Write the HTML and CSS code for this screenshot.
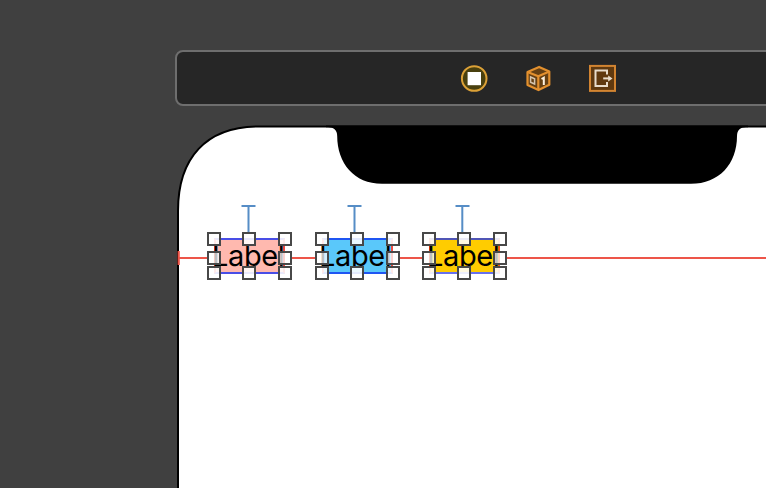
FILE: index.html
```html
<!DOCTYPE html>
<html lang="en">
<head>
<meta charset="utf-8">
<title>Storyboard</title>
<link rel="stylesheet" href="styles.css">
</head>
<body>
<header class="scene-bar">
  <svg class="icon" viewBox="0 0 28 28"><circle cx="14.2" cy="14.5" r="12.3" fill="#49400f" stroke="#dca137" stroke-width="2"/><rect x="7.6" y="8" width="13.4" height="13.2" fill="#fff"/></svg>
  <svg class="icon" viewBox="0 0 28 28"><g transform="translate(.3 .7)"><g stroke="#e3902e" stroke-width="2.2" stroke-linejoin="round"><path d="M3.2 7.2 14.8 2.2 25 6.8V20L14.2 25.4 3.2 20.3Z" fill="#654014"/><path d="M3.2 7.2 14 11.5 25 6.8M14 11.5V25" fill="none"/></g><path d="M6.3 12.3 10.3 14V19.3L6.3 17.6Z" fill="none" stroke="#d5c4ae" stroke-width="1.5"/><path d="M17.2 14.3 19.5 13V20.3" fill="none" stroke="#fff3df" stroke-width="2"/></g></svg>
  <svg class="icon" viewBox="0 0 28 28"><g transform="translate(.2 .6)"><rect x="1.8" y="1.3" width="25" height="25" fill="#60390f" stroke="#d28431" stroke-width="2"/><path d="M18.8 10V5.9H7.3V21.4H18.8V17.5" fill="none" stroke="#e8dccb" stroke-width="2"/><path d="M15 13.8H21" stroke="#e8dccb" stroke-width="2"/><path d="M20 10.8 24.3 13.8 20 16.8Z" fill="#e8dccb"/></g></svg>
</header>
<main class="device">
  <svg class="frame" viewBox="0 0 590 363">
    <path d="M600 1.4H83C30 1.4 2 33 2 86V370H600Z" fill="#fff" stroke="#000" stroke-width="2"/>
    <path d="M150 .4V2.2H152C158 2.2 161.2 5 161.2 11C161.2 38 178 58.8 206 58.8H515C543 58.8 561 39 561 11C561 5 564 2.2 570 2.2H572V.4Z" fill="#000"/>
  </svg>
  <svg class="guides" viewBox="176 125 590 363" fill="none">
    <path d="M178 258H208M291 258H315M398 258H423M506 258H766M178.7 251V265" stroke="#ed5549" stroke-width="2.2"/>
    <path d="M241.5 206H255.5M248.5 206V234M347.5 206H361.5M354.5 206V234M455.5 206H469.5M462.3 206V234" stroke="#568dc6" stroke-width="2"/>
  </svg>
  <div class="label pink"><span class="text">Label</span><i class="h nw"></i><i class="h n"></i><i class="h ne"></i><i class="h w"></i><i class="h e"></i><i class="h sw"></i><i class="h s"></i><i class="h se"></i></div>
  <div class="label blue"><span class="text">Label</span><i class="h nw"></i><i class="h n"></i><i class="h ne"></i><i class="h w"></i><i class="h e"></i><i class="h sw"></i><i class="h s"></i><i class="h se"></i></div>
  <div class="label yellow"><span class="text">Label</span><i class="h nw"></i><i class="h n"></i><i class="h ne"></i><i class="h w"></i><i class="h e"></i><i class="h sw"></i><i class="h s"></i><i class="h se"></i></div>
</main>
</body>
</html>
```
FILE: styles.css
```css
* { box-sizing: border-box; }
body {
  margin: 0;
  width: 766px;
  height: 488px;
  padding: 50px 0 0 175px;
  overflow: hidden;
  background: #404040;
  font-family: Inter, "Liberation Sans", sans-serif;
}
.scene-bar {
  display: flex;
  align-items: center;
  gap: 36px;
  width: 620px;
  height: 56px;
  padding-left: 283px;
  border: 2px solid #6e6e6e;
  border-radius: 8px;
  background: #262626;
}
.icon { width: 28px; height: 28px; flex: none; }
.device {
  position: relative;
  width: 590px;
  height: 363px;
  margin: 19px 0 0 1px;
}
.frame, .guides {
  position: absolute;
  inset: 0;
  width: 590px;
  height: 363px;
}
.label {
  position: absolute;
  top: 113px;
  width: 71px;
  height: 36px;
  border: 2px solid;
  border-color: #494ee6 #f24a40;
}
.pink { left: 38px; background: #ffb9af; }
.blue { left: 146px; background: #5ac8fa; border-top-color: #1f55f2; border-bottom-color: #1f55f2; }
.yellow { left: 253px; background: #ffcc00; border-color: #5055b5 #ff5a16 #6670ee; }
.text {
  position: absolute;
  left: -4px;
  top: -2px;
  font-size: 29px;
  line-height: 36px;
  letter-spacing: -.4px;
  color: #000;
}
.blue .text { left: -5px; }
.h {
  position: absolute;
  width: 14px;
  height: 14px;
  border: 2px solid #484848;
  background: rgba(255, 255, 255, .88);
}
.nw, .n, .ne { top: -8px; }
.w, .e { top: 11px; background: rgba(255, 255, 255, .75); }
.sw, .s, .se { top: 26px; }
.nw, .w, .sw { left: -9px; }
.n, .s { left: 26px; }
.ne, .e, .se { left: 62px; }
```
